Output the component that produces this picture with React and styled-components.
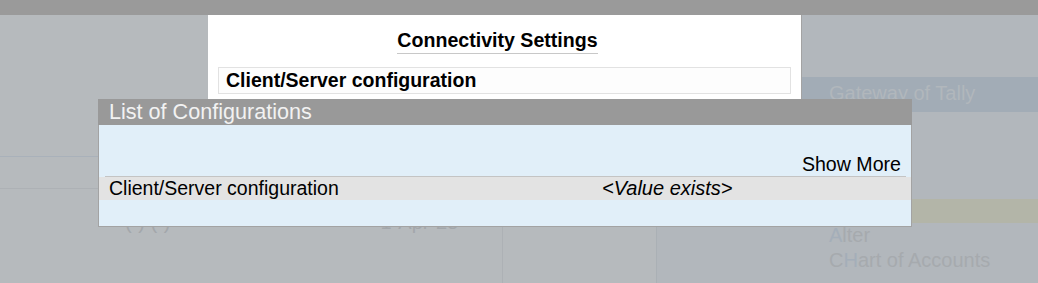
import React from 'react';
import styled, { createGlobalStyle } from 'styled-components';

const GlobalStyle = createGlobalStyle`
  html, body {
    margin: 0;
    padding: 0;
    background: #b6babd;
    font-family: "Liberation Sans", Arial, sans-serif;
  }
`;

const Screen = styled.div`
  position: relative;
  width: 1038px;
  height: 283px;
  overflow: hidden;
  background: #b6babd;
`;

const TopBar = styled.div`
  height: 15px;
  background: #9a9a9a;
`;

const Backdrop = styled.div`
  display: flex;
  height: 268px;
`;

const LeftArea = styled.div`
  width: 656px;
  display: flex;
  flex-direction: column;
`;

const Block = styled.div`
  height: ${p => p.h}px;
  border-bottom: 1px solid ${p => p.line};
`;

const Columns = styled.div`
  flex: 1;
  display: grid;
  grid-template-columns: 503px 1fr;
`;

const Col = styled.div`
  padding: 21px 0 0 ${p => p.pad}px;
  border-right: ${p => (p.divider ? '1px solid #adb1b5' : 'none')};
  font-size: 20px;
  line-height: 24px;
  color: #a3a7ab;
`;

const FaintText = styled.span`
  margin-left: ${p => p.offset || 0}px;
`;

const GatewayPanel = styled.div`
  flex: 1;
  display: flex;
  flex-direction: column;
  background: #b2b7bc;
  border-left: 1px solid #aab0b5;
`;

const Spacer = styled.div`
  height: ${p => p.h}px;
  background: ${p => p.bg || 'transparent'};
`;

const GatewayBand = styled.div`
  height: 35px;
  background: #a2acb6;
  padding-left: 172px;
  box-sizing: border-box;
`;

const GatewayTitle = styled.div`
  height: 23px;
  overflow: hidden;
  font-size: 20px;
  line-height: 23px;
  padding-top: 5px;
  color: #b1b7bc;
  white-space: nowrap;
`;

const MenuList = styled.div`
  padding-left: 172px;
`;

const MenuItem = styled.div`
  font-size: 20px;
  line-height: 25px;
  color: #a6aaae;
  white-space: nowrap;
`;

const Key = styled.span`
  color: #a4aeb9;
`;

const Dialog = styled.div`
  position: absolute;
  left: 208px;
  top: 15px;
  width: 594px;
  height: 100px;
  box-sizing: border-box;
  background: #ffffff;
  border-right: 1px solid #a3a3a3;
  padding: 13px 10px 0;
`;

const TitleRow = styled.div`
  display: flex;
  justify-content: center;
  padding-right: 14px;
`;

const Title = styled.h1`
  margin: 0;
  font-size: 19.6px;
  line-height: 24px;
  font-weight: 700;
  color: #000;
  padding-bottom: 1px;
  border-bottom: 1px solid #c8c8c8;
`;

const Field = styled.div`
  margin-top: 13px;
  border: 1px solid #e2e2e2;
  background: #fdfdfd;
  height: 25px;
  padding-left: 7px;
  font-size: 19.5px;
  line-height: 25px;
  font-weight: 700;
  color: #000;
`;

const Popup = styled.div`
  position: absolute;
  left: 98px;
  top: 99px;
  width: 812px;
  border: 1px solid #a3a3a3;
  border-top: none;
  background: #e1eff9;
`;

const PopupHeader = styled.div`
  height: 26px;
  background: #999999;
  margin: 0 -1px;
  padding-left: 11px;
  font-size: 21.6px;
  line-height: 26px;
  color: #f2f2f2;
`;

const PopupBody = styled.div`
  padding-top: 27px;
  padding-bottom: 26px;
`;

const ShowMore = styled.div`
  text-align: right;
  padding-right: 5px;
  font-size: 19.6px;
  line-height: 24px;
  color: #000;
  border-bottom: 1px solid #c4c4c4;
  margin: 0 5px 0 6px;
`;

const ConfigRow = styled.div`
  display: grid;
  grid-template-columns: 493px 1fr;
  height: 23px;
  padding-left: 10px;
  background: #e3e3e3;
  font-size: 19.5px;
  line-height: 23px;
  color: #000;
`;

const Value = styled.span`
  font-style: italic;
  font-size: 20px;
`;

export default function App() {
  return (
    <Screen>
      <GlobalStyle />
      <TopBar />
      <Backdrop>
        <LeftArea>
          <Block h={141} line="#a9b1ba" />
          <Block h={31} line="#adb1b5" />
          <Columns>
            <Col pad={125} divider>
              <FaintText>(-) (-)</FaintText>
              <FaintText offset={210}>1-Apr-25</FaintText>
            </Col>
            <Col pad={0} />
          </Columns>
        </LeftArea>
        <GatewayPanel>
          <Spacer h={62} />
          <GatewayBand>
            <GatewayTitle>Gateway of Tally</GatewayTitle>
          </GatewayBand>
          <Spacer h={87} />
          <Spacer h={24} bg="#b3b5a8" />
          <MenuList>
            <MenuItem>
              <Key>A</Key>lter
            </MenuItem>
            <MenuItem>
              C<Key>H</Key>art of Accounts
            </MenuItem>
          </MenuList>
        </GatewayPanel>
      </Backdrop>

      <Dialog>
        <TitleRow>
          <Title>Connectivity Settings</Title>
        </TitleRow>
        <Field>Client/Server configuration</Field>
      </Dialog>

      <Popup>
        <PopupHeader>List of Configurations</PopupHeader>
        <PopupBody>
          <ShowMore>Show More</ShowMore>
          <ConfigRow>
            <span>Client/Server configuration</span>
            <Value>&lt;Value exists&gt;</Value>
          </ConfigRow>
        </PopupBody>
      </Popup>
    </Screen>
  );
}
